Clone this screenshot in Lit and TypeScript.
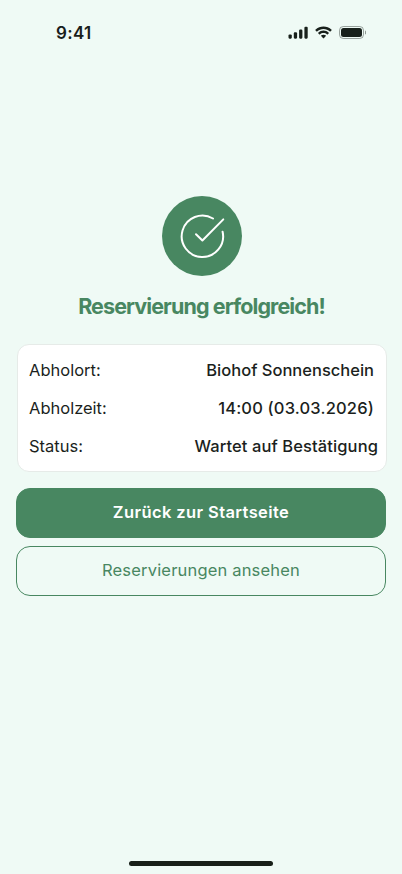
import { LitElement, html, css } from "lit";
import { customElement } from "lit/decorators.js";

@customElement("status-bar")
class StatusBar extends LitElement {
  static styles = css`
    :host {
      display: flex;
      justify-content: space-between;
      align-items: center;
      height: 22px;
      padding: 22px 36px 0 56px;
      color: #18201b;
    }
    .time { font-size: 17px; font-weight: 600; line-height: 22px; letter-spacing: 0.3px; }
    .icons { display: flex; align-items: center; margin-top: -1px; }
    svg { display: block; }
    .wifi { margin: 0 7px; }
  `;

  render() {
    return html`
      <span class="time">9:41</span>
      <div class="icons">
        <svg class="signal" width="20" height="13" viewBox="0 0 20 13" fill="currentColor">
          <rect x="0.5" y="8.5" width="3.3" height="4.2" rx="1.1" />
          <rect x="5.8" y="6.3" width="3.3" height="6.4" rx="1.1" />
          <rect x="11.1" y="3.6" width="3.3" height="9.1" rx="1.1" />
          <rect x="16.4" y="0.7" width="3.3" height="12" rx="1.1" />
        </svg>
        <svg class="wifi" width="17" height="13" viewBox="0 0 17 13" fill="currentColor">
          <path d="M8.5 3c2.400 0 4.700.9 6.400 2.600.1.100.3.100.5 0l1.200-1.300c.2-.2.2-.4 0-.5-4.500-4.300-11.700-4.300-16.200 0-.2.100-.2.300 0 .5l1.200 1.300c.2.100.4.100.5 0C3.800 3.900 6.100 3 8.500 3Z" />
          <path d="M8.500 7.100c1.300 0 2.600.5 3.600 1.400.1.100.3.100.5 0l1.200-1.300c.2-.1.200-.4 0-.5-3-2.800-7.600-2.800-10.600 0-.2.100-.2.400 0 .5l1.200 1.300c.2.100.4.100.5 0 1-.9 2.300-1.400 3.600-1.400Z" />
          <path d="M10.900 10.100c.2-.1.200-.4 0-.5-1.400-1.200-3.400-1.200-4.800 0-.2.100-.2.400 0 .5l2.100 2.200c.2.200.4.200.6 0Z" />
        </svg>
        <svg class="battery" width="27" height="13" viewBox="0 0 27 13">
          <rect x="0.5" y="0.5" width="24" height="12" rx="3.8" fill="none" stroke="currentColor" stroke-opacity="0.4" />
          <rect x="2" y="2" width="21" height="9" rx="2.5" fill="currentColor" />
          <path d="M26 4.600v4c.8-.3 1.300-1.100 1.300-2s-.5-1.700-1.300-2Z" fill="currentColor" fill-opacity="0.45" />
        </svg>
      </div>
    `;
  }
}

@customElement("app-root")
class AppRoot extends LitElement {
  static styles = css`
    :host {
      display: flex;
      flex-direction: column;
      box-sizing: border-box;
      width: 402px;
      height: 874px;
      overflow: hidden;
      background: #effaf5;
      color: #1b1f1d;
      font-family: Inter, "Liberation Sans", sans-serif;
    }
    main { display: flex; flex-direction: column; padding: 152px 16px 0; }
    .badge {
      align-self: center;
      width: 80px;
      height: 80px;
      margin-left: 2px;
      border-radius: 50%;
      background: #488761;
    }
    .badge svg { display: block; }
    h1 {
      margin: 16px 0 0 1px;
      font-size: 21.5px;
      line-height: 28px;
      font-weight: 650;
      letter-spacing: -0.9px;
      text-align: center;
      white-space: nowrap;
      color: #488761;
    }
    .card {
      box-sizing: border-box;
      width: 370px;
      height: 128px;
      margin: 24px 0 16px 1px;
      padding: 14px 12px 0 11px;
      border: 1px solid #e6ebe8;
      border-radius: 12px;
      background: #fff;
    }
    .row {
      display: flex;
      justify-content: space-between;
      height: 22px;
      margin-bottom: 16px;
      font-size: 16.5px;
      line-height: 22px;
      white-space: nowrap;
    }
    .value { font-weight: 500; }
    .time { letter-spacing: 0.17px; }
    .wide { margin-right: -4px; letter-spacing: 0.1px; }
    button {
      box-sizing: border-box;
      width: 370px;
      height: 50px;
      margin: 0 0 8px;
      padding: 0 0 2px;
      border: 1px solid #488761;
      border-radius: 14px;
      font-family: inherit;
      font-size: 16.5px;
      line-height: 22px;
    }
    .primary { background: #488761; color: #fff; font-weight: 600; letter-spacing: 0.4px; }
    .secondary { background: transparent; color: #488761; letter-spacing: 0.18px; }
    .home { width: 144px; height: 5px; margin: auto auto 8px 129px; border-radius: 3px; background: #182019; }
  `;

  render() {
    return html`
      <status-bar></status-bar>
      <main>
        <div class="badge">
          <svg width="80" height="80" viewBox="0 0 80 80" fill="none" stroke="#fff" stroke-width="2" stroke-linecap="round" stroke-linejoin="round">
            <path d="M51 22.500A20.700 20.700 0 1 0 60.600 35.700" />
            <path d="M34 38.200L40.400 44.500L61.300 23.400" />
          </svg>
        </div>
        <h1>Reservierung erfolgreich!</h1>
        <section class="card">
          <div class="row"><span class="label">Abholort:</span><span class="value">Biohof Sonnenschein</span></div>
          <div class="row"><span class="label">Abholzeit:</span><span class="value time">14:00 (03.03.2026)</span></div>
          <div class="row"><span class="label">Status:</span><span class="value wide">Wartet auf Bestätigung</span></div>
        </section>
        <button class="primary">Zurück zur Startseite</button>
        <button class="secondary">Reservierungen ansehen</button>
      </main>
      <div class="home"></div>
    `;
  }
}
